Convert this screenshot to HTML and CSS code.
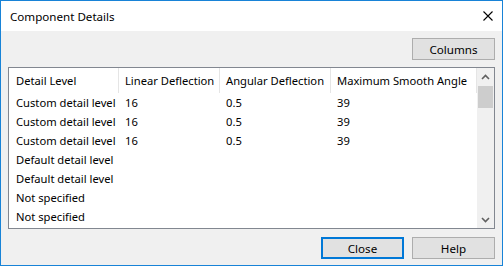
FILE: index.html
```html
<!DOCTYPE html>
<html lang="en">
<head>
    <meta charset="UTF-8">
    <title>Component Details</title>
    <link rel="stylesheet" href="styles.css">
</head>
<body>
    <div class="window">
        <div class="titlebar">
            <span class="title">Component Details</span>
            <svg class="close-x" width="10" height="10" viewBox="0 0 10 10">
                <path d="M0.5 0.5 L9.5 9.5 M9.5 0.5 L0.5 9.5" stroke="#000" stroke-width="1.1" fill="none"/>
            </svg>
        </div>
        <div class="content">
            <div class="top-row">
                <button class="btn">Columns</button>
            </div>
            <div class="list">
                <div class="grid">
                    <div class="head first">Detail Level</div>
                    <div class="head">Linear Deflection</div>
                    <div class="head">Angular Deflection</div>
                    <div class="head">Maximum Smooth Angle</div>

                    <div class="cell first">Custom detail level</div>
                    <div class="cell">16</div>
                    <div class="cell">0.5</div>
                    <div class="cell">39</div>

                    <div class="cell first">Custom detail level</div>
                    <div class="cell">16</div>
                    <div class="cell">0.5</div>
                    <div class="cell">39</div>

                    <div class="cell first">Custom detail level</div>
                    <div class="cell">16</div>
                    <div class="cell">0.5</div>
                    <div class="cell">39</div>

                    <div class="cell first">Default detail level</div>
                    <div class="cell"></div>
                    <div class="cell"></div>
                    <div class="cell"></div>

                    <div class="cell first">Default detail level</div>
                    <div class="cell"></div>
                    <div class="cell"></div>
                    <div class="cell"></div>

                    <div class="cell first">Not specified</div>
                    <div class="cell"></div>
                    <div class="cell"></div>
                    <div class="cell"></div>

                    <div class="cell first">Not specified</div>
                    <div class="cell"></div>
                    <div class="cell"></div>
                    <div class="cell"></div>
                </div>
                <div class="scrollbar">
                    <div class="arrow">
                        <svg width="9" height="6" viewBox="0 0 9 6"><path d="M1 5 L4.5 1.5 L8 5" stroke="#606060" stroke-width="1.6" fill="none"/></svg>
                    </div>
                    <div class="thumb"></div>
                    <div class="track"></div>
                    <div class="arrow">
                        <svg width="9" height="6" viewBox="0 0 9 6"><path d="M1 1 L4.5 4.5 L8 1" stroke="#606060" stroke-width="1.6" fill="none"/></svg>
                    </div>
                </div>
            </div>
            <div class="bottom-row">
                <button class="btn default">Close</button>
                <button class="btn">Help</button>
            </div>
        </div>
    </div>
</body>
</html>
```

FILE: styles.css
```css
*{
    margin:0;
    padding:0;
    box-sizing: border-box;
}
body{
    font-family: "Noto Sans", Arial, sans-serif;
    font-size: 11.2px;
    color: #000;
    background: #fff;
}
.window{
    width: 503px;
    height: 266px;
    border: 1px solid #1883d7;
    display: flex;
    flex-direction: column;
}
.titlebar{
    height: 30px;
    background: #fff;
    display: flex;
    align-items: center;
    justify-content: space-between;
    padding: 0 9px 0 9px;
}
.title{
    font-size: 11.6px;
}
.content{
    flex: 1;
    background: #f0f0f0;
    padding: 7px 7px 6px 7px;
    display: flex;
    flex-direction: column;
}
.top-row, .bottom-row{
    display: flex;
    justify-content: flex-end;
    gap: 8px;
}
.btn{
    width: 83px;
    height: 22px;
    background: #e1e1e1;
    border: 1px solid #adadad;
    font-family: inherit;
    font-size: 11.6px;
    color: #000;
}
.btn.default{
    border: 2px solid #0078d7;
}
.list{
    margin: 7px 0 8px 0;
    height: 162px;
    border: 1px solid #828790;
    background: #fff;
    display: flex;
}
.grid{
    flex: 1;
    display: grid;
    grid-template-columns: 110px 101px 111px 146px;
    grid-template-rows: 25px repeat(7, 19px);
    align-content: start;
}
.head, .cell{
    padding-left: 6px;
    white-space: nowrap;
    overflow: hidden;
    display: flex;
    align-items: center;
}
.head{
    border-right: 1px solid #e5e5e5;
    padding-bottom: 1px;
}
.first{
    padding-left: 7px;
}
.scrollbar{
    width: 17px;
    background: #f0f0f0;
    display: flex;
    flex-direction: column;
}
.arrow{
    height: 17px;
    display: flex;
    align-items: center;
    justify-content: center;
}
.thumb{
    height: 22px;
    margin: 1px 1px 0 1px;
    background: #cdcdcd;
}
.track{
    flex: 1;
}
```
